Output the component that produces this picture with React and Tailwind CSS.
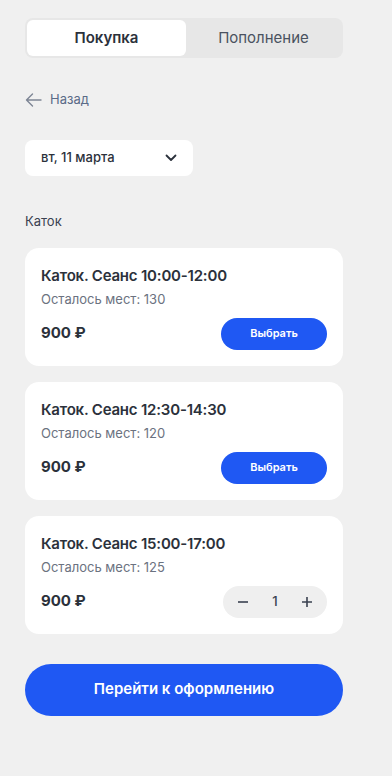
import React, { useState } from 'react';

const sessions = [
  { id: 1, title: 'Каток. Сеанс 10:00-12:00', left: 130, price: 900 },
  { id: 2, title: 'Каток. Сеанс 12:30-14:30', left: 120, price: 900 },
  { id: 3, title: 'Каток. Сеанс 15:00-17:00', left: 125, price: 900 },
];

const SessionCard = ({ session, count, onSelect, onChange }) => (
  <div className="bg-white rounded-[14px] pt-[17px] pb-4 px-4">
    <h3 className="text-[15px] leading-[22px] font-semibold tracking-[-0.2px] text-[#2b313b]">{session.title}</h3>
    <p className="text-[13px] leading-[18px] text-[#6b7280] mt-[3px]">Осталось мест: {session.left}</p>
    <div className="flex items-center justify-between mt-[10px]">
      <span className="text-[15px] font-bold text-[#2b313b]">{session.price} ₽</span>
      {count > 0 ? (
        <div className="w-[104px] h-8 rounded-full bg-[#efefef] flex items-center justify-between px-3 text-[#3a4150]">
          <button onClick={() => onChange(count - 1)} className="w-4 flex justify-center">
            <svg width="12" height="12" viewBox="0 0 12 12"><path d="M1 6h10" stroke="currentColor" strokeWidth="1.6" /></svg>
          </button>
          <span className="text-[13px] font-medium">{count}</span>
          <button onClick={() => onChange(count + 1)} className="w-4 flex justify-center">
            <svg width="12" height="12" viewBox="0 0 12 12"><path d="M1 6h10M6 1v10" stroke="currentColor" strokeWidth="1.6" /></svg>
          </button>
        </div>
      ) : (
        <button onClick={onSelect} className="w-[106px] h-8 rounded-full bg-[#1f58f3] text-white text-[11px] font-semibold">
          Выбрать
        </button>
      )}
    </div>
  </div>
);

export default function App() {
  const [tab, setTab] = useState('buy');
  const [counts, setCounts] = useState({ 1: 0, 2: 0, 3: 1 });

  const setCount = (id, v) => setCounts({ ...counts, [id]: Math.max(0, v) });

  return (
    <div className="min-h-screen bg-[#f0f0f0] font-['Inter',sans-serif] px-[25px] pt-[18px] pb-10 w-[392px]">
      <div className="w-[318px]">
        {/* Tabs */}
        <div className="bg-[#e7e7e7] rounded-lg p-[2px] flex h-10">
          <button
            onClick={() => setTab('buy')}
            className={`w-[159px] rounded-md text-[15px] ${tab === 'buy' ? 'bg-white text-[#2b313b] font-semibold' : 'text-[#4a5260] font-normal'}`}
          >
            Покупка
          </button>
          <button
            onClick={() => setTab('topup')}
            className={`flex-1 rounded-md text-[15px] ${tab === 'topup' ? 'bg-white text-[#2b313b] font-semibold' : 'text-[#4a5260] font-normal'}`}
          >
            Пополнение
          </button>
        </div>

        {/* Back */}
        <div className="flex items-center gap-2 mt-[33px] h-[18px]">
          <svg width="17" height="14" viewBox="0 0 17 14" fill="none">
            <path d="M16 7H1.5M7.5 1L1.5 7l6 6" stroke="#7d8594" strokeWidth="1.4" strokeLinecap="round" strokeLinejoin="round" />
          </svg>
          <span className="text-[13px] text-[#5a6b88]">Назад</span>
        </div>

        {/* Date */}
        <div className="mt-[31px] w-[168px] h-9 bg-white rounded-lg flex items-center justify-between pl-4 pr-4">
          <span className="text-[13px] font-medium text-[#2b313b]">вт, 11 марта</span>
          <svg width="12" height="8" viewBox="0 0 12 8" fill="none">
            <path d="M1.5 1.5L6 6l4.5-4.5" stroke="#2b313b" strokeWidth="1.8" strokeLinecap="round" strokeLinejoin="round" />
          </svg>
        </div>

        <p className="mt-[36px] text-[13px] text-[#3a4150]">Каток</p>

        <div className="mt-[16px] flex flex-col gap-4">
          {sessions.map((s) => (
            <SessionCard
              key={s.id}
              session={s}
              count={counts[s.id]}
              onSelect={() => setCount(s.id, 1)}
              onChange={(v) => setCount(s.id, v)}
            />
          ))}
        </div>

        <button className="mt-[30px] w-full h-[52px] rounded-full bg-[#1f58f3] text-white text-[15px] font-semibold">
          Перейти к оформлению
        </button>
      </div>
    </div>
  );
}
